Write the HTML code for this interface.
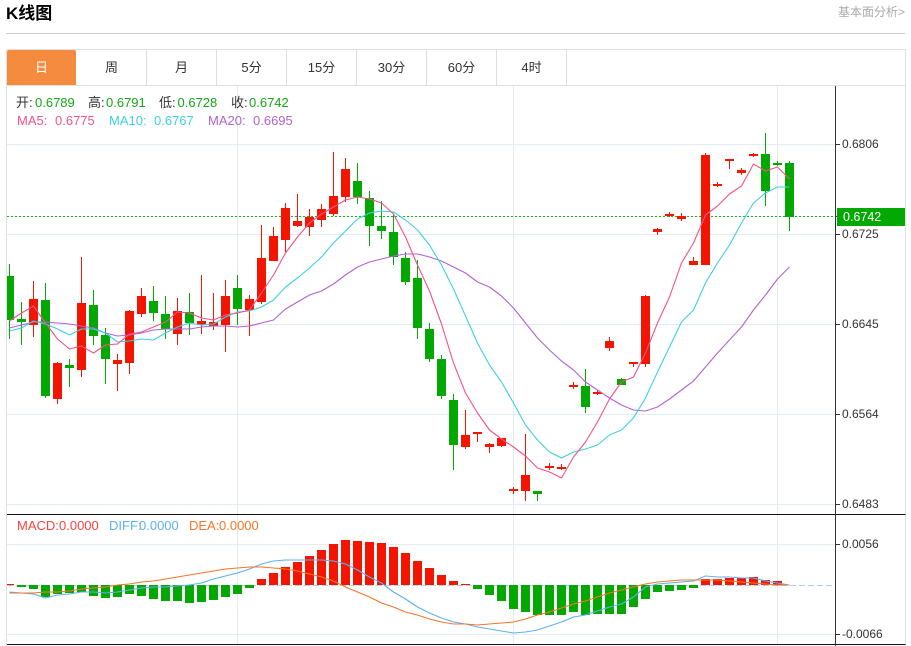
<!DOCTYPE html>
<html lang="zh"><head><meta charset="utf-8"><title>K线图</title>
<style>
html,body{margin:0;padding:0;background:#fff;width:911px;height:646px;overflow:hidden;font-family:"Liberation Sans","Noto Sans CJK SC",sans-serif}
.t{position:absolute;left:6px;top:3px;font-size:17px;font-weight:bold;line-height:22px;color:#000}
.m{position:absolute;left:838px;top:5px;font-size:12px;line-height:15px;color:#aaa;white-space:nowrap}
.hr{position:absolute;left:6px;top:33px;width:899px;height:1px;background:#ccc}
.tb{position:absolute;top:50px;height:35px;line-height:35px;text-align:center;font-size:13px;color:#333;width:69px;border-right:1px solid #ddd}
svg{position:absolute;left:0;top:0}
svg text{font-family:"Liberation Sans","Noto Sans CJK SC",sans-serif}
</style></head><body>
<div class="t">K线图</div>
<div class="m">基本面分析&gt;</div>
<div class="hr"></div>
<svg width="911" height="646" viewBox="0 0 911 646">
<defs><clipPath id="c"><rect x="7" y="86" width="828" height="560"/></clipPath></defs>
<g fill="none" stroke="#e0e0e0" shape-rendering="crispEdges">
<path d="M6.5 49.5H905.5M6.5 85.5H905.5M6.5 49.5V646M905.5 49.5V646"/>
</g>
<g stroke="#e3ecf3" fill="none" shape-rendering="crispEdges">
<path d="M7 144.5H835M7 234.5H835M7 324.5H835M7 414.5H835M7 504.5H835M7 544.5H835M7 634.5H835M237.5 86V644M513.5 86V644M777.5 86V644"/>
</g>
<path d="M7 216.5H835" stroke="#12b812" stroke-dasharray="2 2" shape-rendering="crispEdges"/>
<g clip-path="url(#c)" shape-rendering="crispEdges">
<path stroke="#03a803" fill="none" d="M9.5 264V339M21.5 302V345M45.5 283V398M69.5 359V387M93.5 290V345M105.5 328V384M153.5 286V321M165.5 296V339M189.5 293V335M237.5 275V325M357.5 163V204M369.5 191V246M381.5 201V239M393.5 215V265M405.5 252V285M417.5 260V339M429.5 323V362M441.5 355V399M453.5 394V470M537.5 491V501M585.5 369V413M621.5 378V385M765.5 133V206M777.5 161V166M789.5 161V231"/>
<path fill="#03a803" d="M5 276h9V320h-9zM17 319h9V322h-9zM41 300h9V396h-9zM65 365h9V368h-9zM89 305h9V336h-9zM101 335h9V359h-9zM149 301h9V313h-9zM161 314h9V329h-9zM185 312h9V323h-9zM233 288h9V309h-9zM353 181h9V197h-9zM365 198h9V226h-9zM377 226h9V231h-9zM389 232h9V257h-9zM401 258h9V282h-9zM413 278h9V328h-9zM425 329h9V359h-9zM437 359h9V396h-9zM449 400h9V445h-9zM533 491h9V494h-9zM581 386h9V407h-9zM617 379h9V385h-9zM761 154h9V191h-9zM773 163h9V165h-9zM785 163h9V217h-9z"/>
<path stroke="#f31500" fill="none" d="M33.5 281V337M57.5 362V404M81.5 257V377M117.5 354V391M129.5 310V374M141.5 288V317M177.5 298V345M201.5 275V334M213.5 293V330M225.5 280V352M249.5 295V336M261.5 225V304M273.5 227V261M285.5 203V252M297.5 194V227M309.5 209V236M321.5 204V227M333.5 152V216M345.5 158V202M465.5 410V449M477.5 432V442M489.5 443V453M501.5 438V447M513.5 487V494M525.5 434V501M549.5 463V470M561.5 464V470M573.5 382V389M597.5 390V395M609.5 337V351M633.5 362V367M645.5 295V367M657.5 228V235M669.5 212V217M681.5 213V221M693.5 257V265M705.5 153V265M717.5 182V187M729.5 159V169M741.5 168V175M753.5 153V157"/>
<path fill="#f31500" d="M29 299h9V325h-9zM53 363h9V399h-9zM77 303h9V370h-9zM113 360h9V364h-9zM125 311h9V363h-9zM137 296h9V314h-9zM173 311h9V334h-9zM197 321h9V325h-9zM209 322h9V326h-9zM221 296h9V325h-9zM245 299h9V310h-9zM257 258h9V302h-9zM269 236h9V261h-9zM281 208h9V240h-9zM293 221h9V226h-9zM305 217h9V227h-9zM317 209h9V220h-9zM329 196h9V214h-9zM341 169h9V197h-9zM461 435h9V447h-9zM473 432h9V434h-9zM485 444h9V447h-9zM497 438h9V446h-9zM509 489h9V491h-9zM521 475h9V491h-9zM545 466h9V468h-9zM557 467h9V469h-9zM569 385h9V387h-9zM593 392h9V394h-9zM605 341h9V348h-9zM629 362h9V364h-9zM641 296h9V364h-9zM653 229h9V232h-9zM665 214h9V216h-9zM677 216h9V219h-9zM689 261h9V265h-9zM701 155h9V265h-9zM713 184h9V186h-9zM725 159h9V161h-9zM737 170h9V173h-9zM749 154h9V156h-9z"/>
</g>
<g clip-path="url(#c)" fill="none" stroke-width="1.1" stroke-linejoin="round">
<polyline stroke="#b362d0" points="9.5,328 21.5,325 33.5,322 45.5,322 57.5,323 69.5,324 81.5,326 93.5,328 105.5,333 117.5,336 129.5,335 141.5,333 153.5,330 165.5,329 177.5,329 189.5,329 201.5,327 213.5,326 225.5,326 237.5,327 249.5,326 261.5,323 273.5,320 285.5,309 297.5,302 309.5,295 321.5,291 333.5,284 345.5,275 357.5,267 369.5,262 381.5,259 393.5,256 405.5,254 417.5,254 429.5,257 441.5,261 453.5,267 465.5,273 477.5,282 489.5,287 501.5,296 513.5,308 525.5,323 537.5,338 549.5,350 561.5,361 573.5,370 585.5,382 597.5,390 609.5,398 621.5,405 633.5,410 645.5,411 657.5,407 669.5,399 681.5,390 693.5,381 705.5,367 717.5,353 729.5,340 741.5,327 753.5,310 765.5,295 777.5,279 789.5,267"/>
<polyline stroke="#3fcfe2" points="9.5,331 21.5,328 33.5,321 45.5,324 57.5,329 69.5,335 81.5,329 93.5,329 105.5,333 117.5,342 129.5,341 141.5,339 153.5,340 165.5,333 177.5,327 189.5,323 201.5,325 213.5,324 225.5,317 237.5,312 249.5,311 261.5,307 273.5,300 285.5,287 297.5,278 309.5,268 321.5,257 333.5,243 345.5,231 357.5,219 369.5,213 381.5,211 393.5,212 405.5,220 417.5,230 429.5,245 441.5,265 453.5,289 465.5,316 477.5,343 489.5,365 501.5,382 513.5,403 525.5,425 537.5,440 549.5,452 561.5,458 573.5,452 585.5,449 597.5,445 609.5,435 621.5,430 633.5,418 645.5,398 657.5,372 669.5,347 681.5,322 693.5,310 705.5,283 717.5,263 729.5,245 741.5,223 753.5,203 765.5,193 777.5,187 789.5,187"/>
<polyline stroke="#f4528a" points="9.5,321 21.5,313 33.5,306 45.5,323 57.5,339 69.5,349 81.5,346 93.5,353 105.5,345 117.5,344 129.5,334 141.5,332 153.5,327 165.5,322 177.5,312 189.5,313 201.5,318 213.5,320 225.5,315 237.5,313 249.5,310 261.5,293 273.5,275 285.5,253 297.5,237 309.5,223 321.5,214 333.5,207 345.5,200 357.5,197 369.5,199 381.5,203 393.5,214 405.5,237 417.5,265 429.5,291 441.5,324 453.5,363 465.5,393 477.5,413 489.5,430 501.5,439 513.5,447 525.5,456 537.5,468 549.5,472 561.5,478 573.5,457 585.5,442 597.5,422 609.5,399 621.5,382 633.5,377 645.5,353 657.5,323 669.5,297 681.5,263 693.5,243 705.5,215 717.5,206 729.5,194 741.5,186 753.5,164 765.5,171 777.5,167 789.5,179"/>
</g>
<path d="M7 514.5H905.5M7 644.5H905.5" stroke="#111" shape-rendering="crispEdges"/>
<path d="M7 585.5H835" stroke="#a9d3ea" stroke-dasharray="6 3" shape-rendering="crispEdges"/>
<g clip-path="url(#c)" shape-rendering="crispEdges">
<path fill="#03a803" d="M17 585h9V587h-9zM29 585h9V589h-9zM41 585h9V597h-9zM53 585h9V594h-9zM65 585h9V593h-9zM77 585h9V592h-9zM89 585h9V596h-9zM101 585h9V598h-9zM113 585h9V597h-9zM125 585h9V594h-9zM137 585h9V596h-9zM149 585h9V599h-9zM161 585h9V601h-9zM173 585h9V601h-9zM185 585h9V603h-9zM197 585h9V602h-9zM209 585h9V600h-9zM221 585h9V597h-9zM233 585h9V594h-9zM245 585h9V588h-9zM473 585h9V589h-9zM485 585h9V595h-9zM497 585h9V601h-9zM509 585h9V609h-9zM521 585h9V612h-9zM533 585h9V615h-9zM545 585h9V615h-9zM557 585h9V615h-9zM569 585h9V612h-9zM581 585h9V615h-9zM593 585h9V614h-9zM605 585h9V614h-9zM617 585h9V614h-9zM629 585h9V607h-9zM641 585h9V599h-9zM653 585h9V592h-9zM665 585h9V591h-9zM677 585h9V590h-9zM689 585h9V588h-9z"/>
<path fill="#f31500" d="M7 584h7V585h-7zM257 579h9V585h-9zM269 573h9V585h-9zM281 567h9V585h-9zM293 562h9V585h-9zM305 556h9V585h-9zM317 550h9V585h-9zM329 544h9V585h-9zM341 540h9V585h-9zM353 541h9V585h-9zM365 542h9V585h-9zM377 543h9V585h-9zM389 547h9V585h-9zM401 553h9V585h-9zM413 561h9V585h-9zM425 568h9V585h-9zM437 575h9V585h-9zM449 581h9V585h-9zM461 584h9V585h-9zM701 579h9V585h-9zM713 579h9V585h-9zM725 578h9V585h-9zM737 578h9V585h-9zM749 577h9V585h-9zM761 580h9V585h-9zM773 581h9V585h-9z"/>
</g>
<g clip-path="url(#c)" fill="none" stroke-width="1.1" stroke-linejoin="round">
<polyline stroke="#5fb0f2" points="9.5,592 21.5,593 33.5,594 45.5,598 57.5,595 69.5,594 81.5,592 93.5,592 105.5,593 117.5,592 129.5,590 141.5,588 153.5,587 165.5,587 177.5,586 189.5,585 201.5,583 213.5,579 225.5,576 237.5,573 249.5,569 261.5,564 273.5,561 285.5,560 297.5,560 309.5,560 321.5,560 333.5,561 345.5,564 357.5,570 369.5,577 381.5,583 393.5,592 405.5,599 417.5,607 429.5,613 441.5,618 453.5,622 465.5,624 477.5,627 489.5,629 501.5,631 513.5,633 525.5,632 537.5,630 549.5,626 561.5,622 573.5,617 585.5,615 597.5,611 609.5,607 621.5,604 633.5,597 645.5,587 657.5,584 669.5,583 681.5,582 693.5,581 705.5,576 717.5,577 729.5,577 741.5,578 753.5,578 765.5,581 777.5,583 789.5,585"/>
<polyline stroke="#f5762a" points="9.5,593 21.5,593 33.5,593 45.5,592 57.5,592 69.5,591 81.5,589 93.5,588 105.5,587 117.5,585 129.5,584 141.5,582 153.5,581 165.5,579 177.5,577 189.5,575 201.5,573 213.5,571 225.5,569 237.5,568 249.5,567 261.5,567 273.5,568 285.5,569 297.5,571 309.5,574 321.5,577 333.5,581 345.5,587 357.5,592 369.5,597 381.5,603 393.5,607 405.5,612 417.5,615 429.5,619 441.5,622 453.5,624 465.5,624 477.5,625 489.5,624 501.5,623 513.5,622 525.5,619 537.5,615 549.5,612 561.5,608 573.5,604 585.5,601 597.5,597 609.5,593 621.5,590 633.5,587 645.5,584 657.5,582 669.5,581 681.5,580 693.5,580 705.5,580 717.5,580 729.5,581 741.5,582 753.5,583 765.5,584 777.5,585 789.5,585"/>
</g>
<path d="M835.5 86V646" stroke="#333" shape-rendering="crispEdges"/>
<path d="M836 144.5H840M836 234.5H840M836 324.5H840M836 414.5H840M836 504.5H840M836 544.5H840M836 634.5H840M836 216.5H840" stroke="#333" shape-rendering="crispEdges"/>
<rect x="837" y="208" width="68" height="18" fill="#03a803"/>
<g font-size="12" fill="#333">
<text x="842" y="148">0.6806</text>
<text x="842" y="238">0.6725</text>
<text x="842" y="328">0.6645</text>
<text x="842" y="418">0.6564</text>
<text x="842" y="508">0.6483</text>
<text x="842" y="548">0.0056</text>
<text x="842" y="638">-0.0066</text>
<text x="843" y="221" fill="#fff" font-size="12.5">0.6742</text>
</g>
<g font-size="13">
<text x="16" y="107" fill="#333">开:</text><text x="35" y="107" fill="#12a812">0.6789</text>
<text x="88" y="107" fill="#333">高:</text><text x="106" y="107" fill="#12a812">0.6791</text>
<text x="159" y="107" fill="#333">低:</text><text x="177.5" y="107" fill="#12a812">0.6728</text>
<text x="231" y="107" fill="#333">收:</text><text x="249" y="107" fill="#12a812">0.6742</text>
<text x="17" y="125" fill="#f4528a">MA5:</text><text x="55" y="125" fill="#f4528a">0.6775</text>
<text x="109" y="125" fill="#3fcfe2">MA10:</text><text x="154" y="125" fill="#3fcfe2">0.6767</text>
<text x="208" y="125" fill="#b362d0">MA20:</text><text x="253" y="125" fill="#b362d0">0.6695</text>
<text x="17" y="530" fill="#f4433f">MACD:</text><text x="59" y="530" fill="#f4433f">0.0000</text>
<text x="109" y="530" fill="#5fb0f2">DIFF:</text><text x="139" y="530" fill="#5fb0f2">0.0000</text>
<text x="189" y="530" fill="#f5762a">DEA:</text><text x="219" y="530" fill="#f5762a">0.0000</text>
</g>
</svg>
<div class="tb" style="left:7px;background:#f48b3e;color:#fff;border-right:0;width:69px;border-radius:2px 2px 0 0">日</div>
<div class="tb" style="left:77px">周</div>
<div class="tb" style="left:147px">月</div>
<div class="tb" style="left:217px">5分</div>
<div class="tb" style="left:287px">15分</div>
<div class="tb" style="left:357px">30分</div>
<div class="tb" style="left:427px">60分</div>
<div class="tb" style="left:497px">4时</div>
</body></html>
